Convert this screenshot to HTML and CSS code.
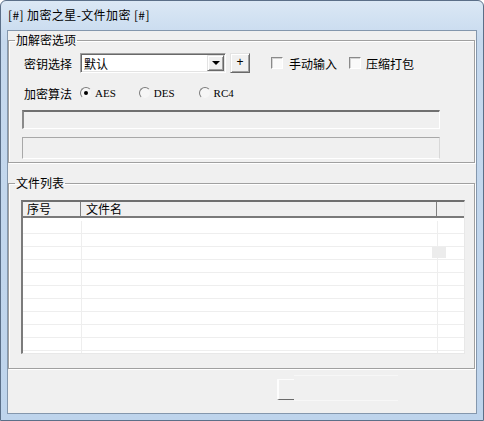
FILE: index.html
```html
<!DOCTYPE html>
<html>
    <head>
        <meta charset="UTF-8">
        <title>加密之星-文件加密</title>
        <link rel="stylesheet" href="styles.css">
    </head>
    <body>
        <div class="window">
            <div class="titlebar">[#] 加密之星-文件加密 [#]</div>
            <div class="client">
                <fieldset class="group group-options">
                    <legend>加解密选项</legend>
                    <div class="row row-key">
                        <span class="label">密钥选择</span>
                        <div class="combo">
                            <span class="combo-text">默认</span>
                            <span class="combo-btn"><span class="arrow"></span></span>
                        </div>
                        <span class="btn-plus">+</span>
                        <span class="check check-manual"><span class="box"></span>手动输入</span>
                        <span class="check check-pack"><span class="box"></span>压缩打包</span>
                    </div>
                    <div class="row row-algo">
                        <span class="label">加密算法</span>
                        <span class="radio radio-aes checked"><span class="circle"></span>AES</span>
                        <span class="radio radio-des"><span class="circle"></span>DES</span>
                        <span class="radio radio-rc4"><span class="circle"></span>RC4</span>
                    </div>
                    <div class="edit edit-key"></div>
                    <div class="edit edit-path"></div>
                </fieldset>
                <fieldset class="group group-files">
                    <legend>文件列表</legend>
                    <div class="listview">
                        <div class="lv-head">
                            <span class="col col-no">序号</span>
                            <span class="col col-name">文件名</span>
                            <span class="col col-end"></span>
                        </div>
                        <div class="lv-body">
                            <div class="lv-row"><span class="cell cell-no"></span><span class="cell cell-name"></span><span class="cell cell-end"></span></div>
                            <div class="lv-row"><span class="cell cell-no"></span><span class="cell cell-name"></span><span class="cell cell-end"></span></div>
                            <div class="lv-row"><span class="cell cell-no"></span><span class="cell cell-name"></span><span class="cell cell-end"></span></div>
                            <div class="lv-row"><span class="cell cell-no"></span><span class="cell cell-name"></span><span class="cell cell-end"></span></div>
                            <div class="lv-row"><span class="cell cell-no"></span><span class="cell cell-name"></span><span class="cell cell-end"></span></div>
                            <div class="lv-row"><span class="cell cell-no"></span><span class="cell cell-name"></span><span class="cell cell-end"></span></div>
                            <div class="lv-row"><span class="cell cell-no"></span><span class="cell cell-name"></span><span class="cell cell-end"></span></div>
                            <div class="lv-row"><span class="cell cell-no"></span><span class="cell cell-name"></span><span class="cell cell-end"></span></div>
                            <div class="lv-row"><span class="cell cell-no"></span><span class="cell cell-name"></span><span class="cell cell-end"></span></div>
                            <div class="lv-row"><span class="cell cell-no"></span><span class="cell cell-name"></span><span class="cell cell-end"></span></div>
                            <div class="lv-row"><span class="cell cell-no"></span><span class="cell cell-name"></span><span class="cell cell-end"></span></div>
                            <span class="lv-ghost"></span>
                        </div>
                    </div>
                </fieldset>
                <div class="footer">
                    <div class="ghost-btn">
                        <span class="ghost-corner"></span>
                        <span class="ghost-rest"></span>
                    </div>
                </div>
            </div>
        </div>
    </body>
</html>
```

FILE: styles.css
```css
html, body {
    margin : 0;
    padding : 0;
}
body {
    width : 484px;
    height : 421px;
    overflow : hidden;
    font-family : "Noto Sans CJK SC", "Liberation Sans", sans-serif;
    font-size : 12px;
    color : #000;
}
.window {
    box-sizing : border-box;
    width : 484px;
    height : 421px;
    border : 1px solid #5b6f88;
    border-radius : 6px 6px 0 0;
    background : linear-gradient(#dbe8f5, #c6d9ee 40px, #bed4ec);
    display : flex;
    flex-direction : column;
}
.titlebar {
    height : 29px;
    line-height : 27px;
    padding-left : 7px;
    letter-spacing : 0.4px;
    white-space : nowrap;
}
.client {
    flex : 1;
    margin : 0 6px 6px 6px;
    border : 1px solid #8497ad;
    background : #f0f0f0;
    display : flex;
    flex-direction : column;
}

/* group boxes */
.group {
    margin : 1px 1px 0 0;
    padding : 0;
    border : 1px solid #a0a0a0;
    box-shadow : 1px 1px 0 #fff, inset 1px 1px 0 #fff;
}
.group legend {
    padding : 0 1px;
    line-height : 16px;
}
.group-options {
    padding : 0 0 3px 15px;
}
.group-options legend {
    margin-left : -9px;
}
.group-files {
    margin-top : 12px;
    padding : 9px 0 14px 12px;
}
.group-files legend {
    margin-left : -6px;
}

.row {
    display : flex;
    align-items : center;
    white-space : nowrap;
}
.row-key {
    margin-top : 5px;
    height : 20px;
}
.row-algo {
    margin-top : 12px;
    height : 16px;
}
.label {
    width : 48px;
    margin-right : 8px;
}

/* combo box */
.combo {
    box-sizing : border-box;
    width : 146px;
    height : 20px;
    display : flex;
    align-items : center;
    background : #fff;
    border : 1px solid;
    border-color : #a0a0a0 #fff #fff #a0a0a0;
    box-shadow : inset 1px 1px 0 #696969, inset -1px -1px 0 #e3e3e3;
}
.combo-text {
    flex : 1;
    padding-left : 3px;
}
.combo-btn {
    box-sizing : border-box;
    width : 17px;
    height : 16px;
    margin-right : 1px;
    background : #f0f0f0;
    border : 1px solid;
    border-color : #e3e3e3 #696969 #696969 #e3e3e3;
    box-shadow : inset 1px 1px 0 #fff, inset -1px -1px 0 #a0a0a0;
    display : flex;
    align-items : center;
    justify-content : center;
}
.arrow {
    width : 0;
    height : 0;
    border-left : 4px solid transparent;
    border-right : 4px solid transparent;
    border-top : 4px solid #000;
}
.btn-plus {
    box-sizing : border-box;
    width : 20px;
    height : 20px;
    margin-left : 4px;
    border : 1px solid;
    border-color : #e3e3e3 #696969 #696969 #e3e3e3;
    box-shadow : inset 1px 1px 0 #fff, inset -1px -1px 0 #a0a0a0;
    text-align : center;
    line-height : 16px;
    font-family : "Liberation Sans", sans-serif;
}

/* check boxes */
.check {
    display : flex;
    align-items : center;
}
.check .box {
    box-sizing : border-box;
    width : 12px;
    height : 12px;
    margin-right : 6px;
    background : #fafafa;
    border : 1px solid;
    border-color : #8a8a8a #fff #fff #8a8a8a;
    box-shadow : inset 1px 1px 0 #d4d4d4;
}
.check-manual {
    margin-left : 21px;
}
.check-pack {
    margin-left : 12px;
}
.check-pack .box {
    margin-right : 5px;
}

/* radio buttons */
.radio {
    display : flex;
    align-items : center;
    font-family : "Liberation Serif", "DejaVu Serif", serif;
    font-size : 11px;
}
.radio .circle {
    box-sizing : border-box;
    width : 12px;
    height : 12px;
    margin-right : 3px;
    border-radius : 50%;
    border : 1px solid;
    border-color : #7c7c7c #f0f0f0 #f0f0f0 #7c7c7c;
    background : #f6f6f6;
    display : flex;
    align-items : center;
    justify-content : center;
}
.radio.checked .circle::after {
    content : "";
    width : 4px;
    height : 4px;
    border-radius : 50%;
    background : #000;
}
.radio-des {
    margin-left : 23px;
}
.radio-rc4 {
    margin-left : 24px;
}

/* read-only edit boxes */
.edit {
    box-sizing : border-box;
    width : 418px;
    margin-left : -2px;
    background : #f0f0f0;
}
.edit-key {
    margin-top : 9px;
    height : 19px;
    border-top : 2px solid #707070;
    border-left : 2px solid #8a8a8a;
    border-right : 1px solid #fff;
    border-bottom : 1px solid #fff;
}
.edit-path {
    margin-top : 8px;
    height : 22px;
    border : 1px solid;
    border-color : #a8a8a8 #d8d8d8 #fff #a8a8a8;
}

/* file list */
.listview {
    box-sizing : border-box;
    width : 444px;
    height : 154px;
    background : #fff;
    border-top : 2px solid #6f6f6f;
    border-left : 2px solid #7b7b7b;
    border-right : 1px solid #e8e8e8;
    border-bottom : 1px solid #e8e8e8;
    display : flex;
    flex-direction : column;
    overflow : hidden;
}
.lv-head {
    display : flex;
    height : 15px;
    line-height : 14px;
    background : #f0f0f0;
    border-bottom : 2px solid #7a7a7a;
}
.col {
    box-sizing : border-box;
    padding-left : 4px;
}
.col-no {
    width : 58px;
    border-right : 1px solid #808080;
}
.col-name {
    width : 356px;
    padding-left : 5px;
    border-right : 1px solid #808080;
}
.col-end {
    flex : 1;
}
.lv-body {
    position : relative;
    padding-top : 3px;
}
.lv-row {
    display : flex;
    height : 12px;
    border-bottom : 1px solid #eeeeee;
}
.cell {
    box-sizing : border-box;
}
.cell-no {
    width : 59px;
    border-right : 1px solid #eeeeee;
}
.cell-name {
    width : 356px;
    border-right : 1px solid #eeeeee;
}
.cell-end {
    flex : 1;
}
.lv-ghost {
    position : absolute;
    left : 409px;
    top : 29px;
    width : 14px;
    height : 11px;
    background : #ececec;
}

/* bottom strip */
.footer {
    flex : 1;
    padding : 10px 0 0 269px;
}
.ghost-btn {
    display : flex;
    width : 121px;
    height : 21px;
}
.ghost-corner {
    box-sizing : border-box;
    width : 17px;
    height : 21px;
    border-top : 1px solid #fcfcfc;
    border-left : 2px solid #fdfdfd;
    border-bottom : 1px solid #6a6a6a;
}
.ghost-rest {
    flex : 1;
    border-top : 1px solid #f7f7f7;
    border-bottom : 1px solid #f7f7f7;
    margin-top : -4px;
    height : 24px;
}
```
